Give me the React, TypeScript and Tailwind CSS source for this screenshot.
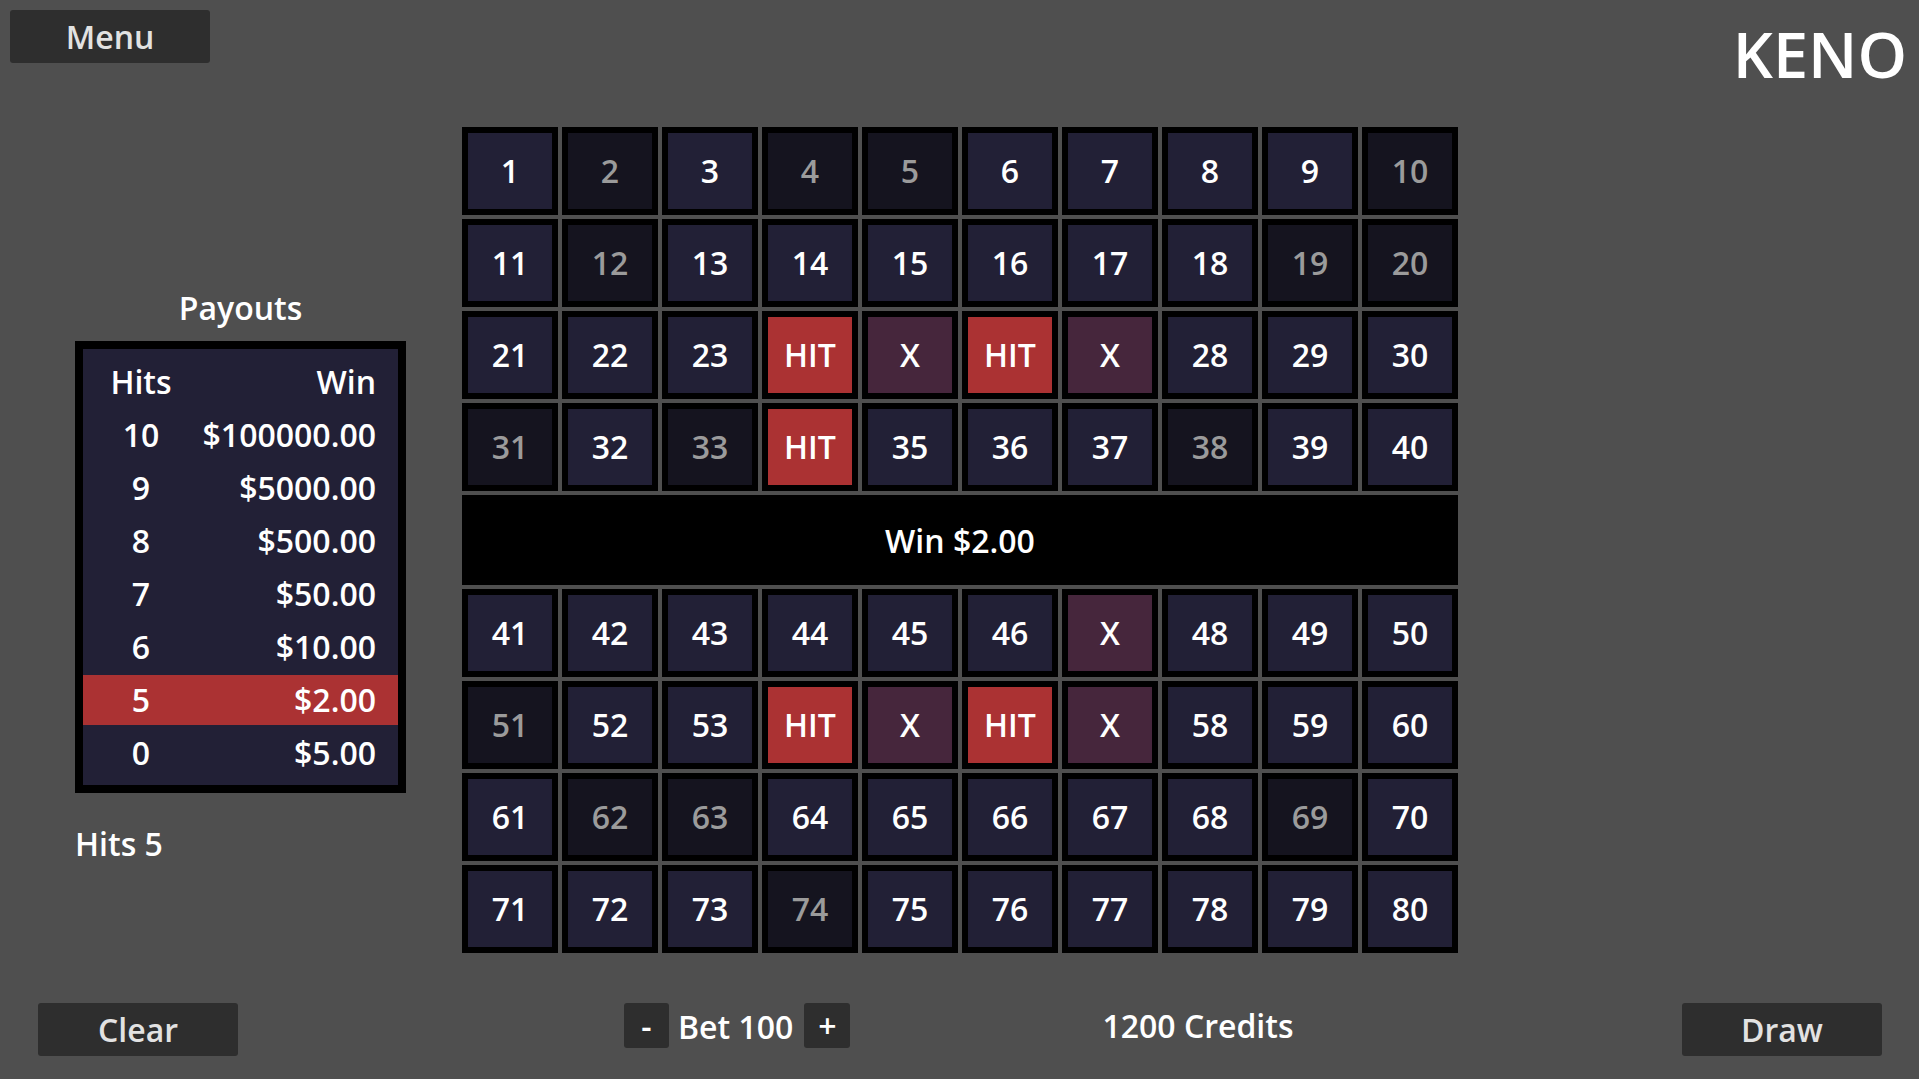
import React from 'react';

type CellState = 'normal' | 'dim' | 'hit' | 'miss';

const dim = [2, 4, 5, 10, 12, 19, 20, 31, 33, 38, 51, 62, 63, 69, 74];
const hits = [24, 26, 34, 54, 56];
const misses = [25, 27, 47, 55, 57];

const payouts = [
  { hits: '10', win: '$100000.00' },
  { hits: '9', win: '$5000.00' },
  { hits: '8', win: '$500.00' },
  { hits: '7', win: '$50.00' },
  { hits: '6', win: '$10.00' },
  { hits: '5', win: '$2.00', active: true },
  { hits: '0', win: '$5.00' },
];

const stateOf = (n: number): CellState => {
  if (hits.includes(n)) return 'hit';
  if (misses.includes(n)) return 'miss';
  if (dim.includes(n)) return 'dim';
  return 'normal';
};

const Cell: React.FC<{ n: number }> = ({ n }) => {
  const state = stateOf(n);
  const inner =
    state === 'hit'
      ? 'bg-[#ab3233] text-white'
      : state === 'miss'
        ? 'bg-[#46263c] text-white'
        : state === 'dim'
          ? 'bg-[#15141f] text-[#9b9b9b]'
          : 'bg-[#222036] text-white';
  const label = state === 'hit' ? 'HIT' : state === 'miss' ? 'X' : String(n);
  return (
    <div className="h-[88px] border-[6px] border-black bg-black">
      <div className={`h-full w-full flex items-center justify-center ${inner}`}>{label}</div>
    </div>
  );
};

const Button: React.FC<{ label: string; className?: string }> = ({ label, className }) => (
  <button className={`w-[200px] h-[53px] rounded-[3px] bg-[#2e2e2e] text-[#e2e2e2] leading-[40px] ${className ?? ''}`}>
    {label}
  </button>
);

export default function App() {
  const top = Array.from({ length: 40 }, (_, i) => i + 1);
  const bottom = Array.from({ length: 40 }, (_, i) => i + 41);

  return (
    <div className="w-[1919px] h-[1079px] bg-[#4f4f4f] text-white text-[32px] leading-[40px] font-semibold font-['Open_Sans',sans-serif] flex flex-col overflow-hidden">
      {/* header */}
      <div className="flex items-start justify-between h-[127px]">
        <Button label="Menu" className="mt-[10px] ml-[10px]" />
        <div className="mt-[22px] mr-[12px] text-[63px] leading-[64px]">KENO</div>
      </div>

      {/* main */}
      <div className="flex items-start pl-[75px] gap-[56px]">
        <div className="w-[331px] flex flex-col pt-[161px]">
          <div className="text-center">Payouts</div>
          <div className="mt-[13px] border-[8px] border-black bg-[#222036] h-[452px] pt-[6px]">
            <div className="flex items-center h-[53px]">
              <div className="w-[116px] text-center">Hits</div>
              <div className="flex-1 text-right pr-[22px]">Win</div>
            </div>
            {payouts.map((p) => (
              <div key={p.hits} className="h-[53px] flex items-center">
                <div className={`w-full flex items-center ${p.active ? 'h-[50px] bg-[#ab3233]' : 'h-[53px]'}`}>
                  <div className="w-[116px] text-center">{p.hits}</div>
                  <div className="flex-1 text-right pr-[22px]">{p.win}</div>
                </div>
              </div>
            ))}
          </div>
          <div className="mt-[31px]">Hits 5</div>
        </div>

        <div className="w-[996px] grid grid-cols-10 gap-[4px]">
          {top.map((n) => (
            <Cell key={n} n={n} />
          ))}
          <div className="col-span-10 h-[90px] bg-black flex items-center justify-center pt-[2px]">Win $2.00</div>
          {bottom.map((n) => (
            <Cell key={n} n={n} />
          ))}
        </div>
      </div>

      {/* footer */}
      <div className="mt-[50px] flex items-start h-[53px]">
        <Button label="Clear" className="ml-[38px]" />
        <div className="ml-[386px] flex items-center h-[45px]">
          <button className="w-[45px] h-[45px] rounded-[3px] bg-[#2e2e2e] text-white">-</button>
          <span className="pt-[3px] ml-[9px]">Bet 100</span>
          <button className="ml-[11px] w-[46px] h-[45px] rounded-[3px] bg-[#2e2e2e] text-white">+</button>
        </div>
        <div className="ml-[252px] mt-[3px]">1200 Credits</div>
        <Button label="Draw" className="ml-auto mr-[37px]" />
      </div>
    </div>
  );
}
